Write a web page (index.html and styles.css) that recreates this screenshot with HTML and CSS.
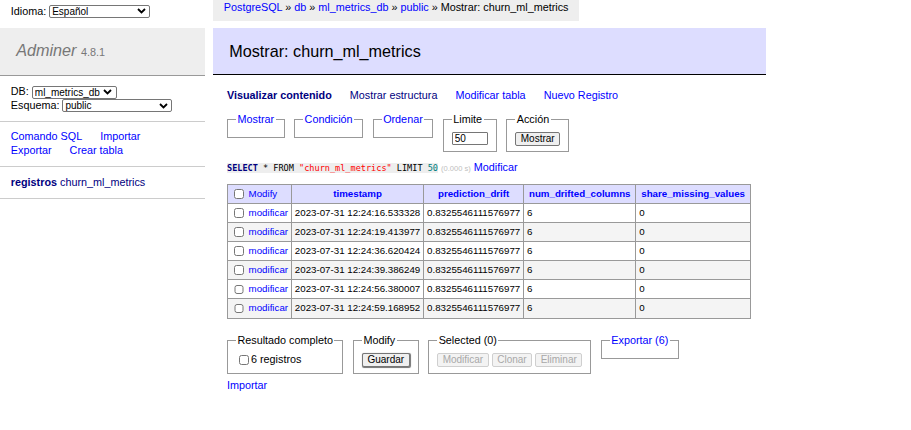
FILE: index.html
```html
<!DOCTYPE html>
<html lang="es">
<head>
<meta charset="utf-8">
<title>Mostrar: churn_ml_metrics - Adminer</title>
<link rel="stylesheet" href="styles.css">
</head>
<body>
<div class="page">
  <aside class="sidebar">
    <form class="lang">Idioma: <select class="sel sel-lang"><option>Español</option></select></form>
    <h1 class="brand"><a class="brand-name" href="#">Adminer</a> <span class="version">4.8.1</span></h1>
    <p class="menu-block dbs">DB: <select class="sel sel-db"><option>ml_metrics_db</option></select><br>Esquema: <select class="sel sel-ns"><option>public</option></select></p>
    <p class="menu-block links"><a href="#">Comando SQL</a> <a href="#">Importar</a><br><a href="#">Exportar</a> <a href="#">Crear tabla</a></p>
    <ul class="menu-block tables"><li><a class="seen strong" href="#">registros</a> <a class="seen" href="#">churn_ml_metrics</a></li></ul>
  </aside>
  <main class="main">
    <div class="breadcrumb"><a href="#">PostgreSQL</a> » <a href="#">db</a> » <a href="#">ml_metrics_db</a> » <a href="#">public</a> » Mostrar: churn_ml_metrics</div>
    <h2 class="title">Mostrar: churn_ml_metrics</h2>
    <div class="content">
      <p class="tabs"><a class="seen strong" href="#">Visualizar contenido</a> <a class="seen" href="#">Mostrar estructura</a> <a href="#">Modificar tabla</a> <a href="#">Nuevo Registro</a></p>
      <form class="filters">
        <fieldset class="box"><legend><a href="#">Mostrar</a></legend></fieldset>
        <fieldset class="box"><legend><a href="#">Condición</a></legend></fieldset>
        <fieldset class="box"><legend><a href="#">Ordenar</a></legend></fieldset>
        <fieldset class="box"><legend>Limite</legend><input class="field" type="text" value="50"></fieldset>
        <fieldset class="box"><legend>Acción</legend><button class="btn" type="button">Mostrar</button></fieldset>
      </form>
      <p class="query"><code class="sql"><a class="kw" href="#">SELECT</a> * FROM <span class="quo">"churn_ml_metrics"</span> LIMIT <span class="num">50</span></code> <span class="time">(0.000 s)</span> <a href="#">Modificar</a></p>
      <table class="grid">
        <thead>
          <tr>
            <td><input class="check" type="checkbox"> <a href="#">Modify</a></td>
            <th><a href="#">timestamp</a></th>
            <th><a href="#">prediction_drift</a></th>
            <th><a href="#">num_drifted_columns</a></th>
            <th><a href="#">share_missing_values</a></th>
          </tr>
        </thead>
        <tbody>
          <tr><td><input class="check" type="checkbox"> <a href="#">modificar</a></td><td>2023-07-31 12:24:16.533328</td><td>0.8325546111576977</td><td>6</td><td>0</td></tr>
          <tr><td><input class="check" type="checkbox"> <a href="#">modificar</a></td><td>2023-07-31 12:24:19.413977</td><td>0.8325546111576977</td><td>6</td><td>0</td></tr>
          <tr><td><input class="check" type="checkbox"> <a href="#">modificar</a></td><td>2023-07-31 12:24:36.620424</td><td>0.8325546111576977</td><td>6</td><td>0</td></tr>
          <tr><td><input class="check" type="checkbox"> <a href="#">modificar</a></td><td>2023-07-31 12:24:39.386249</td><td>0.8325546111576977</td><td>6</td><td>0</td></tr>
          <tr><td><input class="check" type="checkbox"> <a href="#">modificar</a></td><td>2023-07-31 12:24:56.380007</td><td>0.8325546111576977</td><td>6</td><td>0</td></tr>
          <tr><td><input class="check" type="checkbox"> <a href="#">modificar</a></td><td>2023-07-31 12:24:59.168952</td><td>0.8325546111576977</td><td>6</td><td>0</td></tr>
        </tbody>
      </table>
      <div class="footer">
        <fieldset class="box"><legend>Resultado completo</legend><label class="all"><input class="check" type="checkbox">6 registros</label></fieldset>
        <fieldset class="box"><legend>Modify</legend><button class="btn btn-default" type="button">Guardar</button></fieldset>
        <fieldset class="box"><legend>Selected (0)</legend><button class="btn" type="button" disabled>Modificar</button> <button class="btn" type="button" disabled>Clonar</button> <button class="btn" type="button" disabled>Eliminar</button></fieldset>
        <fieldset class="box"><legend><a href="#">Exportar (6)</a></legend></fieldset>
      </div>
      <p class="import"><a href="#">Importar</a></p>
    </div>
  </main>
</div>
</body>
</html>
```
FILE: styles.css
```css
* { box-sizing: border-box; }
html, body { margin: 0; }
body {
  font: 10.8px/1.25 "Liberation Sans", Arial, Helvetica, sans-serif;
  color: #000;
  background: #fff;
}
a { color: #00f; text-decoration: none; }
a.seen { color: navy; }
.strong { font-weight: bold; }

.page { display: flex; align-items: flex-start; }

/* sidebar */
.sidebar { width: 205px; flex: none; }
.lang {
  display: flex;
  align-items: center;
  gap: 3px;
  height: 22.6px;
  margin: 0 0 5.4px;
  padding: 0 10.8px;
}
.sel {
  -webkit-appearance: none;
  appearance: none;
  font: 10px/11px "Liberation Sans", Arial, sans-serif;
  height: 13px;
  margin: 0;
  padding: 0 14px 0 2px;
  border: 1px solid #767676;
  border-radius: 2px;
  background: #fff url("data:image/svg+xml,%3Csvg xmlns='http://www.w3.org/2000/svg' width='9' height='6' viewBox='0 0 9 6'%3E%3Cpath d='M1 1l3.5 3.5L8 1' fill='none' stroke='%23000' stroke-width='1.8'/%3E%3C/svg%3E") no-repeat right 3.5px center;
  color: #000;
  vertical-align: middle;
}
.sel-lang { width: 101px; }
.sel-db { width: 85px; }
.sel-ns { width: 110px; }

.brand {
  margin: 0;
  padding: 12px 16.2px 13px;
  font-size: 16.2px;
  line-height: 20.25px;
  font-weight: normal;
  color: #777;
  background: #eee;
  border-bottom: 1px solid #999;
}
.brand-name { color: #777; font-style: italic; }
.version { font-size: 10.85px; color: #777; }

.menu-block {
  margin: 0;
  padding: 8.64px 10.8px;
  border-bottom: 1px solid #ccc;
}
.links a { margin-right: 15px; }
.tables { list-style: none; white-space: nowrap; }

/* main */
.main { flex: none; padding-left: 8px; }
.breadcrumb {
  width: fit-content;
  height: 21px;
  line-height: 15px;
  padding: 0 10.8px;
  background: #eee;
  white-space: nowrap;
}
.title {
  width: 553px;
  margin: 7px 0 14px;
  padding: 13px 16.2px;
  font-size: 16.2px;
  line-height: 20.25px;
  font-weight: normal;
  background: #ddf;
  border-bottom: 1px solid #000;
}
.content { padding-left: 14px; }

.tabs { margin: 0; white-space: nowrap; }
.tabs a { margin-right: 15px; }

.filters, .footer {
  display: flex;
  align-items: flex-start;
  gap: 9.5px;
}
.filters { margin-top: 10px; }
.box {
  margin: 0;
  min-width: 0;
  padding: 5.4px 8px;
  border: 1px solid #999;
}
.box legend { padding: 0 1.5px; }

.field {
  display: block;
  width: 36px;
  height: 13.5px;
  margin: 0;
  padding: 0 2px;
  font: 10px "Liberation Sans", Arial, sans-serif;
  border: 1px solid #767676;
  border-radius: 1px;
  background: #fff;
}
.btn {
  height: 14px;
  margin: 0;
  padding: 0 4.5px;
  font: 10px/12px "Liberation Sans", Arial, sans-serif;
  color: #000;
  background: #efefef;
  border: 1px solid #767676;
  border-radius: 2px;
  vertical-align: middle;
}
.btn-default { box-shadow: 0.75px 0.75px 0.75px #777; }
.btn:disabled {
  color: #a8a8a8;
  background: #f3f3f3;
  border-color: #cfcfcf;
}

.query { margin: 8.6px 0 0; white-space: nowrap; }
.sql {
  font: 8.55px/1.25 "DejaVu Sans Mono", monospace;
  background: #eee;
  color: #000;
}
.sql .kw { font-weight: bold; color: navy; }
.quo { color: red; }
.num { color: #007f7f; }
.time { color: silver; font-size: 7.56px; }

.grid {
  margin-top: 9.5px;
  border-collapse: collapse;
  font-size: 9.72px;
}
.grid td, .grid th {
  padding: 1.94px 2.92px;
  border: 1px solid #999;
  white-space: nowrap;
  text-align: left;
}
.grid thead th {
  padding: 1.94px 4.86px;
  text-align: center;
  font-weight: bold;
}
.grid thead td, .grid thead th { background: #ddf; }
.grid tbody tr:nth-child(2n) { background: #f4f4f4; }
.check {
  width: 9.75px;
  height: 9.75px;
  margin: 2.25px 2.25px 2.25px 3px;
  vertical-align: middle;
}

.footer { margin-top: 15.5px; }
.all { white-space: nowrap; }
.import { margin: 5px 0 0; }
```
